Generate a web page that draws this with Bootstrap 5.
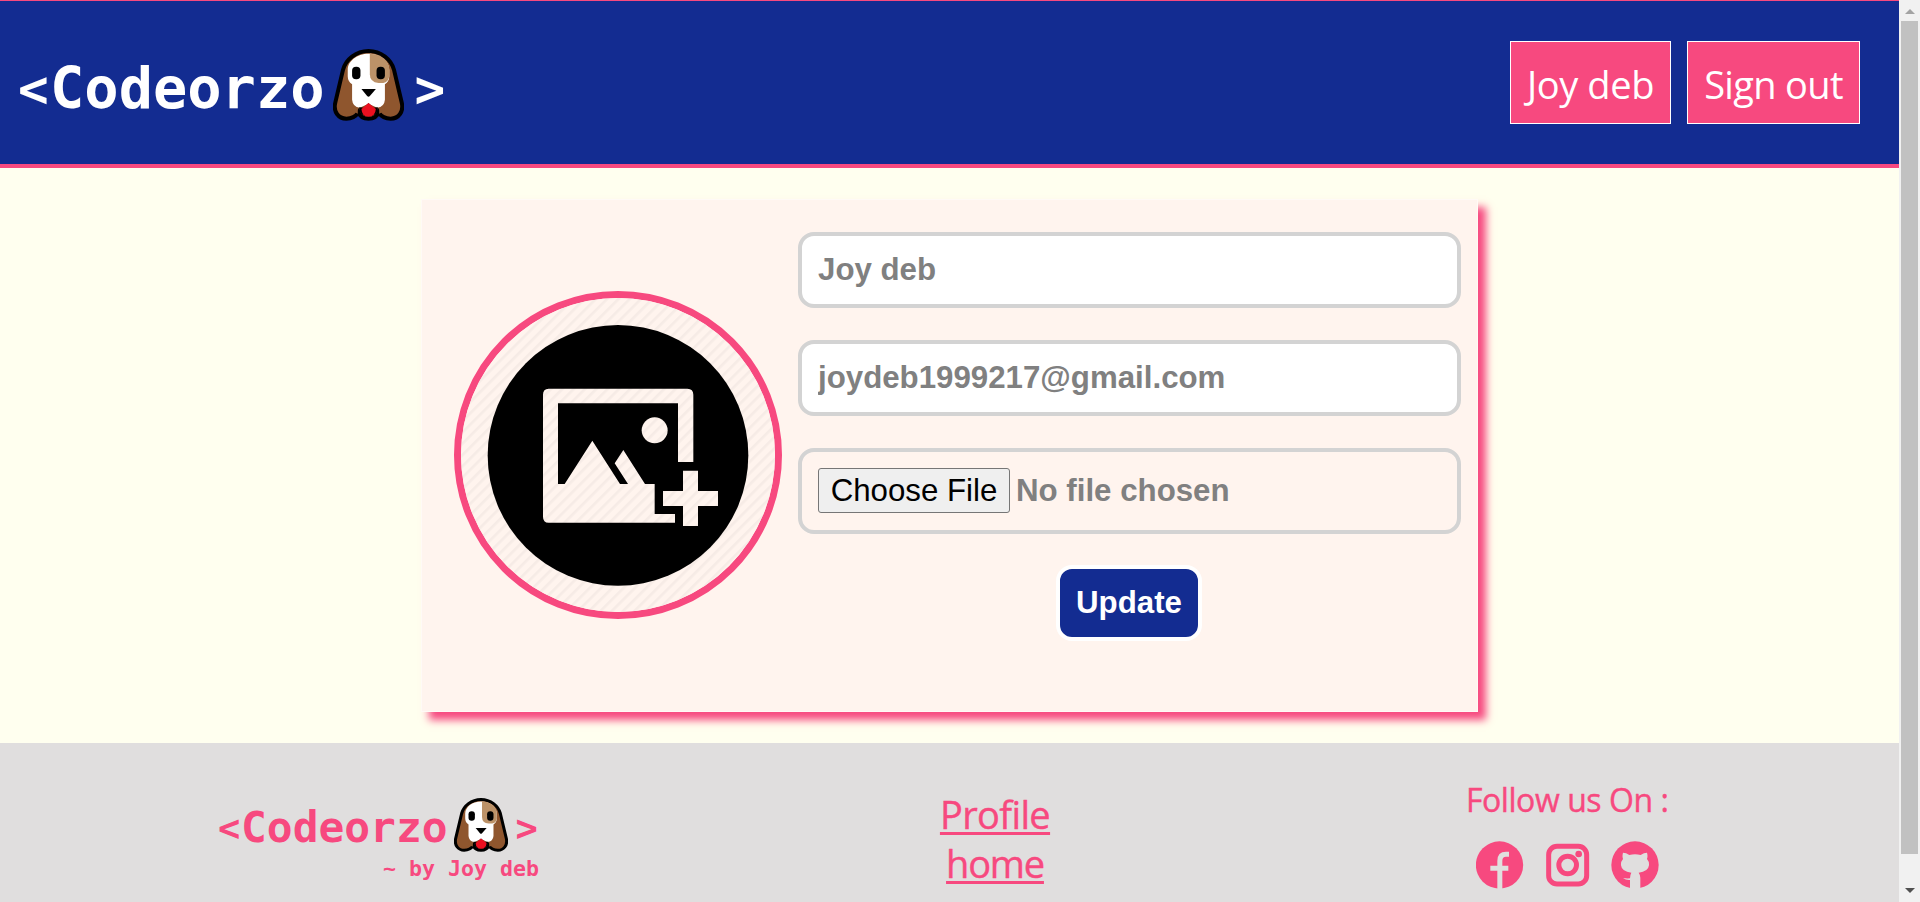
<!DOCTYPE html>
<html lang="en">
<head>
<meta charset="utf-8">
<meta name="viewport" content="width=device-width, initial-scale=1">
<title>Codeorzo - Profile</title>
<link href="https://cdn.jsdelivr.net/npm/bootstrap@5.3.0/dist/css/bootstrap.min.css" rel="stylesheet">
<style>
:root { --pink:#f7497f; --navy:#132c91; --grey:#e0dede; }
body { height:902px; overflow:hidden; background:#ffffef; font-family:"Open Sans","Noto Sans",sans-serif; }
.page { width:1899px; }
.topbar { height:168px; background:var(--navy); border-top:1px solid var(--pink); border-bottom:4px solid var(--pink); padding:0 39px 0 18px; }
.logo { font-family:"DejaVu Sans Mono",monospace; font-weight:700; line-height:1; white-space:nowrap; }
.logo-lg { font-size:57px; color:#fff; padding-top:6px; height:72px; margin-top:48px; }
.logo-lg .angle { font-size:51px; width:32px; padding-top:3px; }
.logo-lg svg { width:71px; height:72px; margin:-7px 11px 0 8px; }
.nav-btn { height:83px; padding:9px 0 0; background:var(--pink); border:1px solid #fff; color:#fff; font-size:38px; line-height:66px; text-align:center; white-space:nowrap; margin-top:40px; }
.card-box { width:1057px; height:513px; margin:31px 0 31px 421px; background:#fff4ee; border:1px solid #fffaf6; box-shadow:8px 8px 8px var(--pink); padding:32px 16px 0 32px; }
.avatar { width:328px; height:328px; border:7px solid var(--pink); border-radius:50%; margin-top:59px; overflow:hidden; }
.avatar svg { width:314px; height:314px; display:block; }
.fields { width:663px; font-family:"Liberation Sans",Arial,sans-serif; font-size:31.25px; font-weight:700; color:gray; gap:32px; }
.field { width:663px; height:76px; border:4px solid lightgray; border-radius:16px; padding:0 16px 1px; font-weight:700; color:gray; background:#fff; line-height:36px; }
.field-file { height:86px; background:transparent; white-space:nowrap; }
.choose { width:192px; height:45px; padding:0; background:#efefef; border:1px solid #767676; border-radius:3px; color:#000; font-weight:400; line-height:43px; text-align:center; margin-right:6px; }
.update { width:146px; height:76px; margin:-1px 2px 0 0; background:var(--navy); color:#fff; border:4px solid #fff; border-radius:16px; font-weight:700; padding:0 0 0 1px; }
.foot { height:159px; background:var(--grey); color:var(--pink); }
.foot-brand { width:322px; margin-left:217px; padding-top:55px; }
.logo-sm { font-size:42.9px; height:54px; padding-left:1px; }
.logo-sm span { padding-top:5px; }
.logo-sm .angle { font-size:37px; width:23px; padding-top:7px; }
.logo-sm svg { width:54px; height:54px; margin:0 8px 0 6px; }
.byline { font:700 21.6px/26px "DejaVu Sans Mono",monospace; text-align:right; margin-top:4px; }
.foot-links { width:112px; margin-left:400px; padding-top:47px; font-size:38px; line-height:49px; }
.foot-links a { color:var(--pink); text-decoration:underline; text-decoration-thickness:3px; text-underline-offset:3px; text-decoration-skip-ink:none; }
.foot-links, .follow { -webkit-text-stroke:.4px var(--pink); }
.follow { width:204px; margin-left:415px; padding-top:34px; font-size:32px; line-height:46px; white-space:nowrap; }
.socials { width:184px; height:48px; margin:18px 0 0 10px; display:block; }
.scroll { width:21px; height:902px; background:#f1f1f1; padding:8px 2px 0 2px; }
.thumb { width:17px; height:833px; background:#c1c1c1; }
</style>
</head>
<body>
<svg width="0" height="0" class="d-none">
  <symbol id="dog" viewBox="1000 148 212 216" preserveAspectRatio="none">
    <path d="M1106 154C1068 154 1038 180 1030 210L1007 308C1000 336 1016 357 1040 357C1056 357 1068 350 1076 338C1080 350 1091 357 1106 357C1121 357 1132 350 1136 338C1144 350 1156 357 1172 357C1196 357 1212 336 1205 308L1182 210C1174 180 1144 154 1106 154Z" fill="#8f562e" stroke="#000" stroke-width="12"/>
    <path d="M1106 162C1072 162 1044 184 1044 210V230Q1044 245 1057 254V300Q1059 322 1080 324L1106 312L1132 324Q1153 322 1155 300V254Q1168 245 1168 230V210C1168 184 1140 162 1106 162Z" fill="#fff"/>
    <path d="M1110 162C1146 163 1168 184 1168 210V230Q1166 247 1150 250H1136Q1110 248 1110 224Z" fill="#bc9268"/>
    <path d="M1058 322V330Q1064 340 1074 342V324ZM1154 322V330Q1148 340 1138 342V324Z" fill="#8f562e"/>
    <path d="M1106 310L1092 324L1078 323Q1078 351 1106 351Q1134 351 1134 323L1120 324Z" fill="#000"/>
    <path d="M1106 310L1085 328Q1086 351 1106 351Q1126 351 1128 328Z" fill="#eb1020"/>
    <rect x="1057" y="201" width="25" height="38" rx="12"/><rect x="1130" y="201" width="25" height="38" rx="12"/>
    <path d="M1085 268H1128L1110 289Q1106 293 1102 289Z"/>
  </symbol>
</svg>
<div class="d-flex">
  <div class="page flex-shrink-0">
    <header class="topbar d-flex align-items-start">
      <div class="logo logo-lg d-flex align-items-center"><span class="angle">&lt;</span><span>Codeorzo</span><svg><use href="#dog"/></svg><span class="angle">&gt;</span></div>
      <nav class="d-flex gap-3 ms-auto">
        <a class="nav-btn text-decoration-none" href="#" style="width:161px;letter-spacing:-.4px">Joy deb</a>
        <a class="nav-btn text-decoration-none" href="#" style="width:173px;letter-spacing:-.65px">Sign out</a>
      </nav>
    </header>
    <main class="card-box d-flex">
      <div class="avatar flex-shrink-0">
        <svg viewBox="123 324 942 942">
          <defs><pattern id="hatch" width="24" height="24" patternUnits="userSpaceOnUse" patternTransform="rotate(45)"><rect x="0" width="8" height="24" fill="#000"/></pattern></defs>
          <rect x="123" y="324" width="942" height="942" fill="#fff4ee"/>
          <circle cx="594" cy="796" r="391"/>
          <g fill="#fff4ee">
            <path fill-rule="evenodd" d="M386 596H802Q820 596 820 614V816H774V640H414V882H434L517 752L600 882H624L584 820L610 780L675 882H704V972H765V998H386Q369 998 369 980V614Q369 596 386 596Z"/>
            <circle cx="704" cy="721" r="39"/>
            <path d="M789 842H834V903H894V948H834V1008H789V948H729V903H789Z"/>
          </g>
          <rect x="123" y="324" width="942" height="942" fill="url(#hatch)" opacity=".035"/>
        </svg>
      </div>
      <form class="fields d-flex flex-column ms-3 flex-shrink-0">
        <input class="field" type="text" value="Joy deb" aria-label="Name">
        <input class="field" type="text" value="joydeb1999217@gmail.com" aria-label="Email">
        <div class="field field-file d-flex align-items-center"><button type="button" class="choose">Choose File</button><span>No file chosen</span></div>
        <button type="button" class="update align-self-center">Update</button>
      </form>
    </main>
    <footer class="foot d-flex align-items-start">
      <div class="foot-brand flex-shrink-0">
        <div class="logo logo-sm d-flex align-items-center"><span class="angle">&lt;</span><span>Codeorzo</span><svg><use href="#dog"/></svg><span class="angle">&gt;</span></div>
        <div class="byline">~ by Joy deb</div>
      </div>
      <div class="foot-links d-flex flex-column align-items-center">
        <a href="#" style="letter-spacing:-.63px">Profile</a>
        <a href="#" style="letter-spacing:-1.2px">home</a>
      </div>
      <div class="follow">
        <div style="letter-spacing:-.45px">Follow us On :</div>
        <svg class="socials" viewBox="108 244 552 144">
          <g fill="#f7497f">
            <circle cx="178.500" cy="316" r="71"/>
            <circle cx="585" cy="316" r="71"/>
            <circle cx="416" cy="283" r="10"/>
          </g>
          <g fill="none" stroke="#e0dede" stroke-width="15">
            <path d="M179.500 390V304Q179.500 284 198 284H207M151 326H205"/>
          </g>
          <g fill="none" stroke="#f7497f" stroke-width="15">
            <rect x="326" y="260" width="114" height="113" rx="25"/>
            <circle cx="383" cy="316" r="26.500"/>
          </g>
          <path fill="#e0dede" d="M549 279Q558 279 568 286Q585 281 602 286Q612 279 621 279Q624 289 621 298Q628 306 627 317Q625 336 596 339Q601 346 601 354V388H570V361Q558 362 549 355Q558 357 570 356Q570 346 574 339Q545 336 543 317Q542 306 549 298Q546 289 549 279Z"/>
        </svg>
      </div>
    </footer>
  </div>
  <aside class="scroll flex-shrink-0 d-flex flex-column align-items-center" aria-hidden="true">
    <svg width="10" height="13" viewBox="0 0 10 13"><path d="M0 6L5 1L10 6Z" fill="#a3a3a3"/></svg>
    <div class="thumb"></div>
    <svg width="10" height="40" viewBox="0 0 10 40"><path d="M0 34H10L5 39Z" fill="#505050"/></svg>
  </aside>
</div>
<script src="https://cdn.jsdelivr.net/npm/bootstrap@5.3.0/dist/js/bootstrap.bundle.min.js"></script>
</body>
</html>
